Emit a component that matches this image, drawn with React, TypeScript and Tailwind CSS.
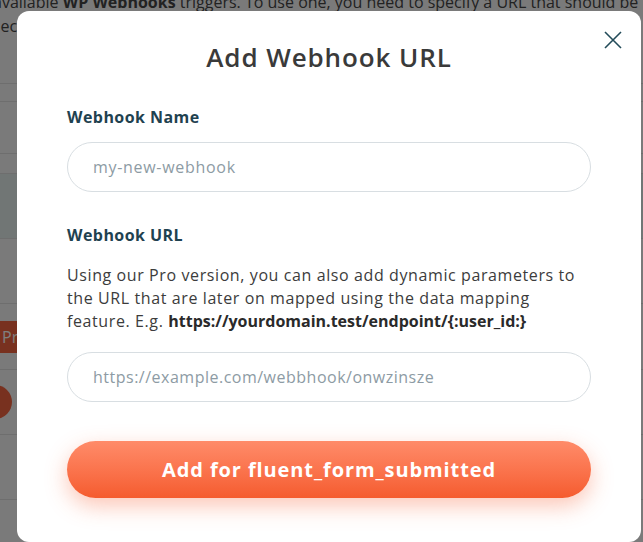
export default function App() {
  return (
    <div className="relative h-[542px] w-[643px] overflow-hidden bg-[#f4f4f4] font-['Open_Sans',sans-serif]">
      {/* page behind the dialog */}
      <div className="-mt-[10px] flex flex-col">
        <p className="-ml-[7px] whitespace-nowrap text-[16px] leading-[24px] text-[#444]">
          available <b>WP Webhooks</b> triggers. To use one, you need to specify a URL that should be
        </p>
        <p className="-ml-[17px] whitespace-nowrap text-[16px] leading-[24px] text-[#444]">checked</p>
        <div className="mt-[45px] flex flex-col">
          <div className="h-[18px] border-t border-[#dcdcdc]" />
          <div className="h-[52px] border-t border-[#dcdcdc]" />
          <div className="h-[20px] border-t border-[#dcdcdc]" />
          <div className="h-[65px] border-t border-[#dcdcdc] bg-[#e2eceb]" />
          <div className="h-[65px] border-t border-[#dcdcdc]" />
          <div className="flex h-[66px] items-start border-t border-[#dcdcdc] pt-[17px]">
            <span className="-ml-[2px] flex h-[32px] items-center rounded-r bg-[#f0623f] px-1 text-[16px] text-white">
              Pr
            </span>
          </div>
          <div className="flex h-[65px] items-center border-t border-[#dcdcdc]">
            <span className="-ml-[22px] h-[34px] w-[34px] rounded-full bg-[#f0623f]" />
          </div>
          <div className="h-[65px] border-t border-[#dcdcdc]" />
          <div className="h-[65px] border-t border-[#dcdcdc]" />
        </div>
      </div>

      {/* overlay */}
      <div className="absolute inset-0 bg-black/50" />

      {/* dialog */}
      <div className="absolute left-[17px] top-[11px] flex h-[531px] w-[624px] flex-col rounded-xl bg-white px-[50px] pt-[30px]">
        <button type="button" className="absolute right-[19px] top-[20px] text-[#234b59]" aria-label="Close">
          <svg width="18" height="18" viewBox="0 0 18 18" fill="none" stroke="currentColor" strokeWidth="1.6">
            <path d="M1 1l16 16M17 1L1 17" />
          </svg>
        </button>

        <h2 className="text-center text-[26px] font-semibold leading-[32px] tracking-[0.9px] text-[#3a3a3a]">
          Add Webhook URL
        </h2>

        <label className="mt-[32px] text-[16px] font-bold leading-[24px] tracking-[0.45px] text-[#1f4250]">
          Webhook Name
        </label>
        <input
          className="mt-[13px] h-[50px] rounded-full border border-[#d8dee2] px-[25px] text-[16px] tracking-[0.7px] text-[#3a3a3a] outline-none placeholder:text-[#8d9ba4]"
          placeholder="my-new-webhook"
        />

        <label className="mt-[31px] text-[16px] font-bold leading-[24px] tracking-[0.45px] text-[#1f4250]">
          Webhook URL
        </label>
        <p className="mt-[17px] text-[16px] leading-[23px] tracking-[0.6px] text-[#3c3c3c]">
          Using our Pro version, you can also add dynamic parameters to the URL that are later on mapped using the
          data mapping feature. E.g.{" "}
          <b className="tracking-normal text-[#2a2a2a]">https://yourdomain.test/endpoint/{"{:user_id:}"}</b>
        </p>
        <input
          className="mt-[19px] h-[50px] rounded-full border border-[#d8dee2] px-[25px] text-[16px] tracking-[0.5px] text-[#3a3a3a] outline-none placeholder:text-[#8d9ba4]"
          placeholder="https://example.com/webbhook/onwzinsze"
        />

        <button
          type="button"
          className="mt-[39px] h-[57px] rounded-full bg-gradient-to-b from-[#ff8b69] to-[#f55b2d] text-[20px] font-bold tracking-[0.9px] text-white shadow-[0_8px_22px_rgba(245,91,45,0.35)]"
        >
          Add for fluent_form_submitted
        </button>
      </div>
    </div>
  );
}
